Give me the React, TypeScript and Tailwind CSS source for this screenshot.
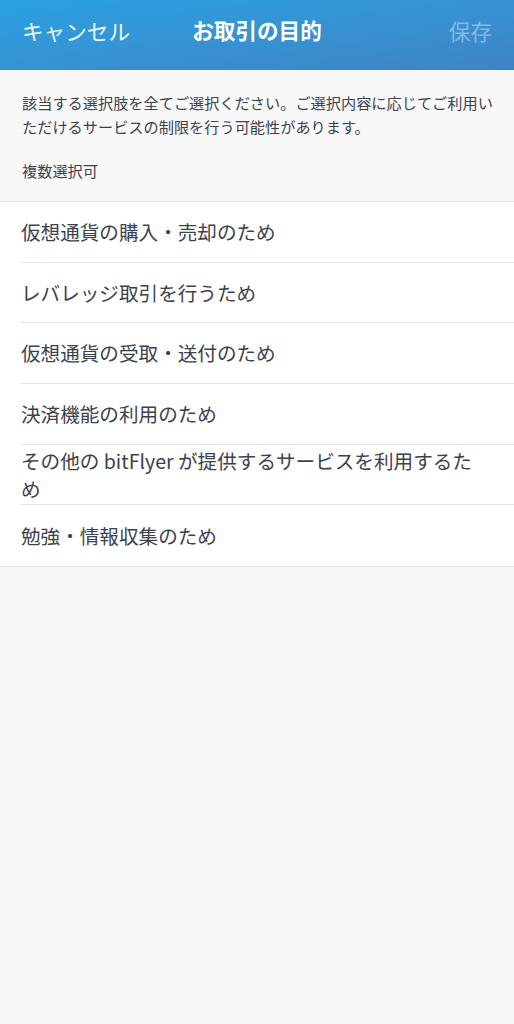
import React from "react";

const items = [
  "仮想通貨の購入・売却のため",
  "レバレッジ取引を行うため",
  "仮想通貨の受取・送付のため",
  "決済機能の利用のため",
  "その他の bitFlyer が提供するサービスを利用するため",
  "勉強・情報収集のため",
];

export default function App() {
  return (
    <div
      className="min-h-[1024px] w-full bg-[#f8f8f8]"
      style={{ fontFamily: '"Noto Sans CJK JP", "Noto Sans", sans-serif' }}
    >
      <header className="relative flex h-[70px] items-center justify-between bg-gradient-to-br from-[#29a1e1] to-[#3e84c5] px-[22px] pb-[7px] text-[21.6px]">
        <span className="text-white/90">キャンセル</span>
        <span className="absolute left-1/2 top-[14px] -translate-x-1/2 font-bold text-white">お取引の目的</span>
        <span className="text-white/40">保存</span>
      </header>
      <div className="pl-[22px] pr-[16px] pt-[20px] pb-[19px] text-[#3c424e]">
        <p className="text-[15.2px] leading-[24px]">
          該当する選択肢を全てご選択ください。ご選択内容に応じてご利用いただけるサービスの制限を行う可能性があります。
        </p>
        <p className="mt-[20px] text-[15.2px] leading-[24px]">複数選択可</p>
      </div>
      <ul className="border-y border-[#e3e3e3] bg-white">
        {items.map((t, i) => (
          <li key={i} className="pl-[21px]">
            <div
              className={`flex min-h-[60.7px] items-center pr-[36px] text-[19.6px] leading-[28px] text-[#3c424e] ${
                i < items.length - 1 ? "border-b border-[#e3e3e3]" : ""
              }`}
            >
              {t}
            </div>
          </li>
        ))}
      </ul>
    </div>
  );
}
